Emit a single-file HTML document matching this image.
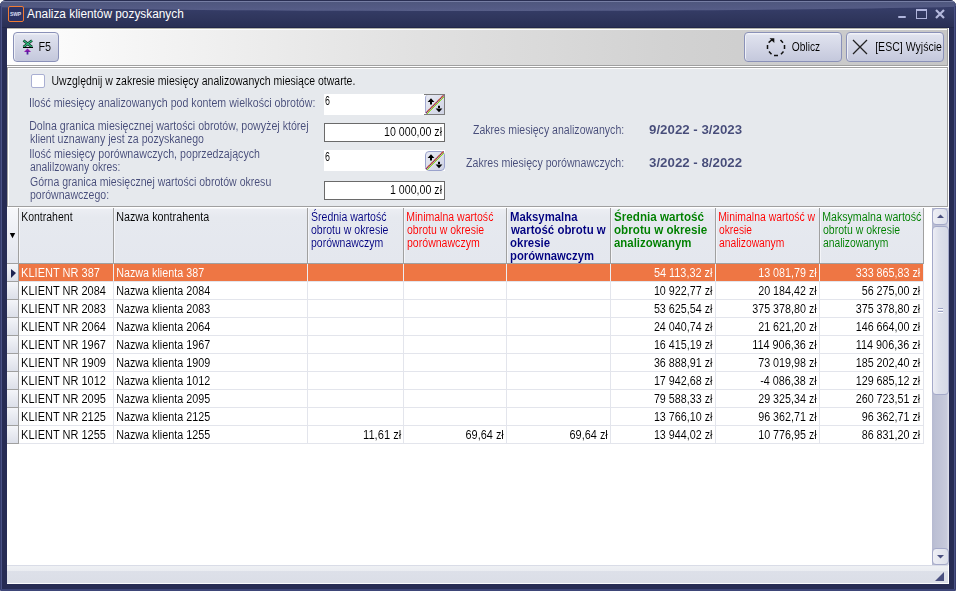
<!DOCTYPE html>
<html><head><meta charset="utf-8">
<style>
*{margin:0;padding:0;box-sizing:border-box}
html,body{width:956px;height:591px;overflow:hidden;background:#fff;font-family:"Liberation Sans",sans-serif}
.a{position:absolute}
#win{left:0;top:0;width:956px;height:591px;background:#272c54;border-radius:6px 6px 2px 2px;overflow:hidden}
#title{left:0;top:0;width:956px;height:28px;background:linear-gradient(#292e52 0px,#292e52 1px,#767ea4 1px,#767ea4 2px,#383f6b 2px,#353c67 9px,#31385f 16px,#2d335a 22px,#2a3055 26.5px,#22274a 27px,#22274a 28px)}
#band{left:-97px;top:2px;width:1134px;height:8.7px;background:linear-gradient(#4f577e,#535a84 60%,#575e88);border-radius:0 0 50% 50%/0 0 100% 100%}
.btn{border:1px solid #8a91b8;border-radius:4px;background:linear-gradient(#f2f3f8 0px,#f2f3f8 1px,#dfe2ee 2px,#d3d6e6 50%,#c4c8dc);box-shadow:inset 1px 0 0 #eef0f6}
.hsep{background:#a0a0a0}
svg{position:absolute;left:0;top:0}
</style></head><body>
<div id="win" class="a">
  <div id="title" class="a"></div>
  <div id="band" class="a"></div>
  <!-- frame edge lines -->
  <div class="a" style="left:0;top:6px;width:1px;height:585px;background:#353c6c"></div>
  <div class="a" style="left:1px;top:4px;width:1px;height:587px;background:#4a5284"></div>
  <div class="a" style="left:955px;top:6px;width:1px;height:585px;background:#353c6c"></div>
  <div class="a" style="left:954px;top:4px;width:1px;height:587px;background:#4a5284"></div>
  <div class="a" style="left:0;top:589px;width:956px;height:2px;background:#3e4678"></div>
  <!-- app icon -->
  <div class="a" style="left:8px;top:6px;width:16px;height:16px;border:1.5px solid #f07b34;border-radius:2px;background:#2b3264"></div>
  <div class="a" style="left:10px;top:12px;width:13px;height:4px;color:#d8dcf0;font-size:5px;line-height:4px;font-weight:bold;letter-spacing:-0.2px">SWP</div>
  <!-- caption buttons -->
  <div class="a" style="left:898px;top:16px;width:8px;height:2px;border-radius:1px;background:#b0b5dc"></div>
  <div class="a" style="left:916px;top:9px;width:11px;height:10px;border:1.3px solid #b0b5dc;border-top-width:2.3px"></div>

  <!-- client area -->
  <div class="a" style="left:7px;top:28px;width:942px;height:556px;background:#fff"></div>
  <!-- toolbar -->
  <div class="a" style="left:7px;top:28px;width:942px;height:39px;background:linear-gradient(90deg,#ffffff 0%,#f4f4f4 15%,#e2e2e2 42%,#d2d2d2 70%,#c6c6c6 100%)"></div>
  <div class="a" style="left:7px;top:28px;width:942px;height:1px;background:#b4b4ac"></div>
  <div class="a" style="left:7px;top:29px;width:940px;height:1px;background:#ffffff"></div>
  <div class="a" style="left:7px;top:65px;width:941px;height:1px;background:#a0a0a0"></div>
  <div class="a" style="left:7px;top:66px;width:942px;height:1px;background:#ffffff"></div>
  <div class="a" style="left:947px;top:29px;width:1px;height:37px;background:#a0a0a0"></div>
  <div class="a" style="left:948px;top:28px;width:1px;height:39px;background:#ffffff"></div>
  <div class="a btn" style="left:13px;top:32px;width:46px;height:30px"></div>
  <div class="a btn" style="left:744px;top:32px;width:98px;height:30px"></div>
  <div class="a btn" style="left:846px;top:32px;width:98px;height:30px"></div>

  <!-- panel -->
  <div class="a" style="left:7px;top:67px;width:942px;height:140px;background:#e6e9ed"></div>
  <div class="a" style="left:7px;top:67px;width:941px;height:1px;background:#a0a0a0"></div>
  <div class="a" style="left:8px;top:68px;width:939px;height:1px;background:#ffffff"></div>
  <div class="a" style="left:7px;top:67px;width:1px;height:140px;background:#a0a0a0"></div>
  <div class="a" style="left:8px;top:68px;width:1px;height:138px;background:#ffffff"></div>
  <div class="a" style="left:947px;top:67px;width:1px;height:140px;background:#a0a0a0"></div>
  <div class="a" style="left:948px;top:67px;width:1px;height:140px;background:#ffffff"></div>
  <div class="a" style="left:7px;top:206px;width:941px;height:1px;background:#a0a0a0"></div>
  <!-- checkbox -->
  <div class="a" style="left:31px;top:74px;width:14px;height:14px;border:1px solid #a9afd2;border-radius:2px;background:#fff"></div>
  <!-- inputs -->
  <div class="a" style="left:324px;top:94px;width:100px;height:21px;background:#fff"></div>
  <div class="a" style="left:424px;top:94px;width:21px;height:21px;border:1px solid #7c7c7c;border-left:0;background:#fff"></div>
  <div class="a" style="left:425px;top:95px;width:19px;height:19px;border-radius:3px 0 0 3px;border-left:1px solid #a4abd2;background:linear-gradient(135deg,#e8eaf3,#cfd3e4)"></div>
  <div class="a" style="left:324px;top:123px;width:121px;height:19px;border:1px solid #6a6a6a;background:#fff"></div>
  <div class="a" style="left:324px;top:150px;width:121px;height:21px;background:#fff"></div>
  <div class="a" style="left:425px;top:151px;width:20px;height:20px;border-radius:4px;border:1px solid #9aa2cc;background:linear-gradient(135deg,#e8eaf3,#cfd3e4)"></div>
  <div class="a" style="left:324px;top:181px;width:121px;height:19px;border:1px solid #6a6a6a;background:#fff"></div>

  <!-- grid -->
  <div class="a" style="left:7px;top:207px;width:942px;height:358px;background:#fff"></div>
  <div class="a" style="left:7px;top:207px;width:917px;height:57px;background:linear-gradient(#ffffff 0px,#ffffff 1px,#eceef3 2px,#e6e9ef 10px,#e4e7ee 100%)"></div>
  <div class="a" style="left:7px;top:208px;width:11px;height:55px;background:linear-gradient(#f7f8fb,#e2e5ee)"></div>
  <div class="a" style="left:7px;top:263px;width:917px;height:1px;background:#a0a0a0"></div>
  <div class="a" style="left:18px;top:208px;width:1px;height:55px;background:#a0a0a0"></div>
<div class="a" style="left:19px;top:208px;width:1px;height:55px;background:#f4f5f9"></div>
<div class="a" style="left:113px;top:208px;width:1px;height:55px;background:#a0a0a0"></div>
<div class="a" style="left:114px;top:208px;width:1px;height:55px;background:#f4f5f9"></div>
<div class="a" style="left:307px;top:208px;width:1px;height:55px;background:#a0a0a0"></div>
<div class="a" style="left:308px;top:208px;width:1px;height:55px;background:#f4f5f9"></div>
<div class="a" style="left:403px;top:208px;width:1px;height:55px;background:#a0a0a0"></div>
<div class="a" style="left:404px;top:208px;width:1px;height:55px;background:#f4f5f9"></div>
<div class="a" style="left:506px;top:208px;width:1px;height:55px;background:#a0a0a0"></div>
<div class="a" style="left:507px;top:208px;width:1px;height:55px;background:#f4f5f9"></div>
<div class="a" style="left:610px;top:208px;width:1px;height:55px;background:#a0a0a0"></div>
<div class="a" style="left:611px;top:208px;width:1px;height:55px;background:#f4f5f9"></div>
<div class="a" style="left:715px;top:208px;width:1px;height:55px;background:#a0a0a0"></div>
<div class="a" style="left:716px;top:208px;width:1px;height:55px;background:#f4f5f9"></div>
<div class="a" style="left:819px;top:208px;width:1px;height:55px;background:#a0a0a0"></div>
<div class="a" style="left:820px;top:208px;width:1px;height:55px;background:#f4f5f9"></div>
<div class="a" style="left:923px;top:208px;width:1px;height:55px;background:#a0a0a0"></div>
<div class="a" style="left:19px;top:264px;width:904px;height:17px;background:#ee7644"></div>
<div class="a" style="left:7px;top:264px;width:11px;height:17px;background:linear-gradient(#f4f5f9,#dcdfe9)"></div>
<div class="a" style="left:7px;top:281px;width:12px;height:1px;background:#a0a0a0"></div>
<div class="a" style="left:19px;top:281px;width:905px;height:1px;background:#e3e5ec"></div>
<div class="a" style="left:18px;top:264px;width:1px;height:18px;background:#a0a0a0"></div>
<div class="a" style="left:113px;top:264px;width:1px;height:17px;background:#eceef3"></div>
<div class="a" style="left:307px;top:264px;width:1px;height:17px;background:#eceef3"></div>
<div class="a" style="left:403px;top:264px;width:1px;height:17px;background:#eceef3"></div>
<div class="a" style="left:506px;top:264px;width:1px;height:17px;background:#eceef3"></div>
<div class="a" style="left:610px;top:264px;width:1px;height:17px;background:#eceef3"></div>
<div class="a" style="left:715px;top:264px;width:1px;height:17px;background:#eceef3"></div>
<div class="a" style="left:819px;top:264px;width:1px;height:17px;background:#eceef3"></div>
<div class="a" style="left:923px;top:264px;width:1px;height:17px;background:#eceef3"></div>
<div class="a" style="left:7px;top:282px;width:11px;height:17px;background:linear-gradient(#f4f5f9,#dcdfe9)"></div>
<div class="a" style="left:7px;top:299px;width:12px;height:1px;background:#a0a0a0"></div>
<div class="a" style="left:19px;top:299px;width:905px;height:1px;background:#e3e5ec"></div>
<div class="a" style="left:18px;top:282px;width:1px;height:18px;background:#a0a0a0"></div>
<div class="a" style="left:113px;top:282px;width:1px;height:17px;background:#e3e5ec"></div>
<div class="a" style="left:307px;top:282px;width:1px;height:17px;background:#e3e5ec"></div>
<div class="a" style="left:403px;top:282px;width:1px;height:17px;background:#e3e5ec"></div>
<div class="a" style="left:506px;top:282px;width:1px;height:17px;background:#e3e5ec"></div>
<div class="a" style="left:610px;top:282px;width:1px;height:17px;background:#e3e5ec"></div>
<div class="a" style="left:715px;top:282px;width:1px;height:17px;background:#e3e5ec"></div>
<div class="a" style="left:819px;top:282px;width:1px;height:17px;background:#e3e5ec"></div>
<div class="a" style="left:923px;top:282px;width:1px;height:17px;background:#e3e5ec"></div>
<div class="a" style="left:7px;top:300px;width:11px;height:17px;background:linear-gradient(#f4f5f9,#dcdfe9)"></div>
<div class="a" style="left:7px;top:317px;width:12px;height:1px;background:#a0a0a0"></div>
<div class="a" style="left:19px;top:317px;width:905px;height:1px;background:#e3e5ec"></div>
<div class="a" style="left:18px;top:300px;width:1px;height:18px;background:#a0a0a0"></div>
<div class="a" style="left:113px;top:300px;width:1px;height:17px;background:#e3e5ec"></div>
<div class="a" style="left:307px;top:300px;width:1px;height:17px;background:#e3e5ec"></div>
<div class="a" style="left:403px;top:300px;width:1px;height:17px;background:#e3e5ec"></div>
<div class="a" style="left:506px;top:300px;width:1px;height:17px;background:#e3e5ec"></div>
<div class="a" style="left:610px;top:300px;width:1px;height:17px;background:#e3e5ec"></div>
<div class="a" style="left:715px;top:300px;width:1px;height:17px;background:#e3e5ec"></div>
<div class="a" style="left:819px;top:300px;width:1px;height:17px;background:#e3e5ec"></div>
<div class="a" style="left:923px;top:300px;width:1px;height:17px;background:#e3e5ec"></div>
<div class="a" style="left:7px;top:318px;width:11px;height:17px;background:linear-gradient(#f4f5f9,#dcdfe9)"></div>
<div class="a" style="left:7px;top:335px;width:12px;height:1px;background:#a0a0a0"></div>
<div class="a" style="left:19px;top:335px;width:905px;height:1px;background:#e3e5ec"></div>
<div class="a" style="left:18px;top:318px;width:1px;height:18px;background:#a0a0a0"></div>
<div class="a" style="left:113px;top:318px;width:1px;height:17px;background:#e3e5ec"></div>
<div class="a" style="left:307px;top:318px;width:1px;height:17px;background:#e3e5ec"></div>
<div class="a" style="left:403px;top:318px;width:1px;height:17px;background:#e3e5ec"></div>
<div class="a" style="left:506px;top:318px;width:1px;height:17px;background:#e3e5ec"></div>
<div class="a" style="left:610px;top:318px;width:1px;height:17px;background:#e3e5ec"></div>
<div class="a" style="left:715px;top:318px;width:1px;height:17px;background:#e3e5ec"></div>
<div class="a" style="left:819px;top:318px;width:1px;height:17px;background:#e3e5ec"></div>
<div class="a" style="left:923px;top:318px;width:1px;height:17px;background:#e3e5ec"></div>
<div class="a" style="left:7px;top:336px;width:11px;height:17px;background:linear-gradient(#f4f5f9,#dcdfe9)"></div>
<div class="a" style="left:7px;top:353px;width:12px;height:1px;background:#a0a0a0"></div>
<div class="a" style="left:19px;top:353px;width:905px;height:1px;background:#e3e5ec"></div>
<div class="a" style="left:18px;top:336px;width:1px;height:18px;background:#a0a0a0"></div>
<div class="a" style="left:113px;top:336px;width:1px;height:17px;background:#e3e5ec"></div>
<div class="a" style="left:307px;top:336px;width:1px;height:17px;background:#e3e5ec"></div>
<div class="a" style="left:403px;top:336px;width:1px;height:17px;background:#e3e5ec"></div>
<div class="a" style="left:506px;top:336px;width:1px;height:17px;background:#e3e5ec"></div>
<div class="a" style="left:610px;top:336px;width:1px;height:17px;background:#e3e5ec"></div>
<div class="a" style="left:715px;top:336px;width:1px;height:17px;background:#e3e5ec"></div>
<div class="a" style="left:819px;top:336px;width:1px;height:17px;background:#e3e5ec"></div>
<div class="a" style="left:923px;top:336px;width:1px;height:17px;background:#e3e5ec"></div>
<div class="a" style="left:7px;top:354px;width:11px;height:17px;background:linear-gradient(#f4f5f9,#dcdfe9)"></div>
<div class="a" style="left:7px;top:371px;width:12px;height:1px;background:#a0a0a0"></div>
<div class="a" style="left:19px;top:371px;width:905px;height:1px;background:#e3e5ec"></div>
<div class="a" style="left:18px;top:354px;width:1px;height:18px;background:#a0a0a0"></div>
<div class="a" style="left:113px;top:354px;width:1px;height:17px;background:#e3e5ec"></div>
<div class="a" style="left:307px;top:354px;width:1px;height:17px;background:#e3e5ec"></div>
<div class="a" style="left:403px;top:354px;width:1px;height:17px;background:#e3e5ec"></div>
<div class="a" style="left:506px;top:354px;width:1px;height:17px;background:#e3e5ec"></div>
<div class="a" style="left:610px;top:354px;width:1px;height:17px;background:#e3e5ec"></div>
<div class="a" style="left:715px;top:354px;width:1px;height:17px;background:#e3e5ec"></div>
<div class="a" style="left:819px;top:354px;width:1px;height:17px;background:#e3e5ec"></div>
<div class="a" style="left:923px;top:354px;width:1px;height:17px;background:#e3e5ec"></div>
<div class="a" style="left:7px;top:372px;width:11px;height:17px;background:linear-gradient(#f4f5f9,#dcdfe9)"></div>
<div class="a" style="left:7px;top:389px;width:12px;height:1px;background:#a0a0a0"></div>
<div class="a" style="left:19px;top:389px;width:905px;height:1px;background:#e3e5ec"></div>
<div class="a" style="left:18px;top:372px;width:1px;height:18px;background:#a0a0a0"></div>
<div class="a" style="left:113px;top:372px;width:1px;height:17px;background:#e3e5ec"></div>
<div class="a" style="left:307px;top:372px;width:1px;height:17px;background:#e3e5ec"></div>
<div class="a" style="left:403px;top:372px;width:1px;height:17px;background:#e3e5ec"></div>
<div class="a" style="left:506px;top:372px;width:1px;height:17px;background:#e3e5ec"></div>
<div class="a" style="left:610px;top:372px;width:1px;height:17px;background:#e3e5ec"></div>
<div class="a" style="left:715px;top:372px;width:1px;height:17px;background:#e3e5ec"></div>
<div class="a" style="left:819px;top:372px;width:1px;height:17px;background:#e3e5ec"></div>
<div class="a" style="left:923px;top:372px;width:1px;height:17px;background:#e3e5ec"></div>
<div class="a" style="left:7px;top:390px;width:11px;height:17px;background:linear-gradient(#f4f5f9,#dcdfe9)"></div>
<div class="a" style="left:7px;top:407px;width:12px;height:1px;background:#a0a0a0"></div>
<div class="a" style="left:19px;top:407px;width:905px;height:1px;background:#e3e5ec"></div>
<div class="a" style="left:18px;top:390px;width:1px;height:18px;background:#a0a0a0"></div>
<div class="a" style="left:113px;top:390px;width:1px;height:17px;background:#e3e5ec"></div>
<div class="a" style="left:307px;top:390px;width:1px;height:17px;background:#e3e5ec"></div>
<div class="a" style="left:403px;top:390px;width:1px;height:17px;background:#e3e5ec"></div>
<div class="a" style="left:506px;top:390px;width:1px;height:17px;background:#e3e5ec"></div>
<div class="a" style="left:610px;top:390px;width:1px;height:17px;background:#e3e5ec"></div>
<div class="a" style="left:715px;top:390px;width:1px;height:17px;background:#e3e5ec"></div>
<div class="a" style="left:819px;top:390px;width:1px;height:17px;background:#e3e5ec"></div>
<div class="a" style="left:923px;top:390px;width:1px;height:17px;background:#e3e5ec"></div>
<div class="a" style="left:7px;top:408px;width:11px;height:17px;background:linear-gradient(#f4f5f9,#dcdfe9)"></div>
<div class="a" style="left:7px;top:425px;width:12px;height:1px;background:#a0a0a0"></div>
<div class="a" style="left:19px;top:425px;width:905px;height:1px;background:#e3e5ec"></div>
<div class="a" style="left:18px;top:408px;width:1px;height:18px;background:#a0a0a0"></div>
<div class="a" style="left:113px;top:408px;width:1px;height:17px;background:#e3e5ec"></div>
<div class="a" style="left:307px;top:408px;width:1px;height:17px;background:#e3e5ec"></div>
<div class="a" style="left:403px;top:408px;width:1px;height:17px;background:#e3e5ec"></div>
<div class="a" style="left:506px;top:408px;width:1px;height:17px;background:#e3e5ec"></div>
<div class="a" style="left:610px;top:408px;width:1px;height:17px;background:#e3e5ec"></div>
<div class="a" style="left:715px;top:408px;width:1px;height:17px;background:#e3e5ec"></div>
<div class="a" style="left:819px;top:408px;width:1px;height:17px;background:#e3e5ec"></div>
<div class="a" style="left:923px;top:408px;width:1px;height:17px;background:#e3e5ec"></div>
<div class="a" style="left:7px;top:426px;width:11px;height:17px;background:linear-gradient(#f4f5f9,#dcdfe9)"></div>
<div class="a" style="left:7px;top:443px;width:12px;height:1px;background:#a0a0a0"></div>
<div class="a" style="left:19px;top:443px;width:905px;height:1px;background:#e3e5ec"></div>
<div class="a" style="left:18px;top:426px;width:1px;height:18px;background:#a0a0a0"></div>
<div class="a" style="left:113px;top:426px;width:1px;height:17px;background:#e3e5ec"></div>
<div class="a" style="left:307px;top:426px;width:1px;height:17px;background:#e3e5ec"></div>
<div class="a" style="left:403px;top:426px;width:1px;height:17px;background:#e3e5ec"></div>
<div class="a" style="left:506px;top:426px;width:1px;height:17px;background:#e3e5ec"></div>
<div class="a" style="left:610px;top:426px;width:1px;height:17px;background:#e3e5ec"></div>
<div class="a" style="left:715px;top:426px;width:1px;height:17px;background:#e3e5ec"></div>
<div class="a" style="left:819px;top:426px;width:1px;height:17px;background:#e3e5ec"></div>
<div class="a" style="left:923px;top:426px;width:1px;height:17px;background:#e3e5ec"></div>

  <!-- scrollbar -->
  <div class="a" style="left:932px;top:208px;width:17px;height:357px;background:linear-gradient(90deg,#b6bad1 0px,#bcc0d4 3px,#c2c5d8 10px,#c8cbdc 15px,#dadce8 16px)"></div>
  <div class="a" style="left:932px;top:208px;width:16px;height:17px;border:1px solid #a4a9c9;border-radius:4px;background:linear-gradient(90deg,#eeeff5,#dcdfea)"></div>
  <div class="a" style="left:932px;top:226px;width:17px;height:169px;border:1px solid #a4a9c9;border-radius:4px;background:linear-gradient(90deg,#ecedf4,#dde0eb 40%,#d6d9e6)"></div>
  <div class="a" style="left:932px;top:548px;width:17px;height:17px;border:1px solid #a4a9c9;border-radius:4px;background:linear-gradient(90deg,#eeeff5,#dcdfea)"></div>

  <!-- status bar -->
  <div class="a" style="left:7px;top:565px;width:942px;height:19px;background:linear-gradient(#d9dce7 0px,#d9dce7 1px,#eef0f4 1px,#eaecf1 6px,#dde0e9 6px,#dbdee7 18px,#fbfbfd 18px)"></div>
  <div class="a" style="left:948px;top:565px;width:1px;height:19px;background:#fff"></div>
</div>
<svg width="956" height="591" viewBox="0 0 956 591" font-family="'Liberation Sans', sans-serif">
  <defs><filter id="crisp" x="0" y="0" width="956" height="591" filterUnits="userSpaceOnUse"><feComponentTransfer><feFuncA type="gamma" amplitude="1" exponent="1.15" offset="0"/></feComponentTransfer></filter></defs>
  <!-- close X -->
  <path d="M936 10 L944 18 M944 10 L936 18" stroke="#b4b9dc" stroke-width="2.2"/>
  <!-- F5 icon -->
  <g>
    <path d="M23.5 40.5 L32 47 M32 40.5 L23.5 47" stroke="#102018" stroke-width="2.6"/>
    <path d="M23.5 40.5 L32 47 M32 40.5 L23.5 47" stroke="#30c080" stroke-width="1.2"/>
    <path d="M23 47.5 L33 47.5" stroke="#000" stroke-width="1"/>
    <path d="M24 52 L27.5 48.5 L31 52 Z" fill="#901cb0"/>
    <path d="M26.6 51 H28.4 V54.5 H26.6 Z" fill="#5020a0"/>
  </g>
  <!-- Oblicz icon dashed circle -->
  <path d="M780.5 40 L783 42.8 M784.5 45 V49 M783.5 51.5 L781 54.2 M774 55.5 H778 M771.5 54.2 L769 51.5 M767.5 45 V49 M768.6 42.6 L772.5 39.2" stroke="#111" stroke-width="1.5" fill="none"/>
  <path d="M769.5 38.2 L774.3 38.2 L774.3 43 Z" fill="#111"/>
  <!-- Esc icon X -->
  <path d="M853 40 L867 54 M867 40 L853 54" stroke="#222" stroke-width="1.3"/>
  <!-- spin icons -->
  <g id="spin1">
    <path d="M426 113 L443.5 95.5" stroke="#e06a10" stroke-width="1.2"/>
    <path d="M426 113 L443.5 95.5" stroke="#6020a0" stroke-width="1.2" stroke-dasharray="1 1"/>
    <path d="M427 114 L444 97" stroke="#80e020" stroke-width="1"/>
    <path d="M427.6 102 L431 98.3 L434.4 102 Z M430 101.5 H432 V104.6 H430 Z" fill="#000"/>
    <path d="M435.6 108.6 L439 112.3 L442.4 108.6 Z M438 105.8 H440 V109 H438 Z" fill="#000"/>
  </g>
  <use href="#spin1" transform="translate(0,56)"/>
  <!-- grid row indicator -->
  <path d="M9.8 233 H15.2 L12.5 238.2 Z" fill="#000"/>
  <path d="M11 269 L16 273 L11 278 Z" fill="#1e2452"/>
  <!-- scrollbar arrows & grip -->
  <path d="M937 218 L940.5 214.5 L944 218 Z" fill="#4a5080"/>
  <path d="M937 555 L940.5 558.5 L944 555 Z" fill="#4a5080"/>
  <path d="M938 308.5 H943 M938 311.5 H943" stroke="#9ca2c4" stroke-width="1"/>
  <path d="M938 309.5 H943 M938 312.5 H943" stroke="#fff" stroke-width="1"/>
  <!-- size grip -->
  <path d="M935 581 L944 572 L944 581 Z" fill="#4a5080"/>
<text x="27.10" y="18" font-size="12.5" fill="#ffffff" textLength="156.65" lengthAdjust="spacingAndGlyphs">Analiza klientów pozyskanych</text>
<g filter="url(#crisp)"><text x="38.43" y="51" font-size="12.5" fill="#000" textLength="12.73" lengthAdjust="spacingAndGlyphs">F5</text>
<text x="791.80" y="51" font-size="12.5" fill="#000" textLength="28.40" lengthAdjust="spacingAndGlyphs">Oblicz</text>
<text x="875.20" y="51" font-size="12.5" fill="#000" textLength="66.76" lengthAdjust="spacingAndGlyphs">[ESC] Wyjście</text>
<text x="51.50" y="85" font-size="12.5" fill="#000" textLength="303.90" lengthAdjust="spacingAndGlyphs">Uwzględnij w zakresie miesięcy analizowanych miesiące otwarte.</text>
<text x="28.95" y="107" font-size="12.5" fill="#474d7a" textLength="286.45" lengthAdjust="spacingAndGlyphs">Ilość miesięcy analizowanych pod kontem wielkości obrotów:</text>
<text x="29.15" y="130" font-size="12.5" fill="#474d7a" textLength="279.51" lengthAdjust="spacingAndGlyphs">Dolna granica miesięcznej wartości obrotów, powyżej której</text>
<text x="30.00" y="143" font-size="12.5" fill="#474d7a" textLength="173.96" lengthAdjust="spacingAndGlyphs">klient uznawany jest za pozyskanego</text>
<text x="29.15" y="158" font-size="12.5" fill="#474d7a" textLength="230.81" lengthAdjust="spacingAndGlyphs">Ilość miesięcy porównawczych, poprzedzających</text>
<text x="30.00" y="171" font-size="12.5" fill="#474d7a" textLength="90.39" lengthAdjust="spacingAndGlyphs">analilzowany okres:</text>
<text x="30.00" y="186" font-size="12.5" fill="#474d7a" textLength="241.26" lengthAdjust="spacingAndGlyphs">Górna granica miesięcznej wartości obrotów okresu</text>
<text x="30.00" y="199" font-size="12.5" fill="#474d7a" textLength="79.10" lengthAdjust="spacingAndGlyphs">porównawczego:</text>
<text x="473.00" y="134" font-size="12.5" fill="#474d7a" textLength="151.20" lengthAdjust="spacingAndGlyphs">Zakres miesięcy analizowanych:</text>
<text x="466.00" y="167" font-size="12.5" fill="#474d7a" textLength="158.20" lengthAdjust="spacingAndGlyphs">Zakres miesięcy porównawczych:</text>
<text x="649.00" y="134" font-size="12.5" fill="#474d7a" font-weight="bold" textLength="93.15" lengthAdjust="spacingAndGlyphs">9/2022 - 3/2023</text>
<text x="649.00" y="167" font-size="12.5" fill="#474d7a" font-weight="bold" textLength="93.15" lengthAdjust="spacingAndGlyphs">3/2022 - 8/2022</text>
<text x="325.00" y="105" font-size="12.5" fill="#000" textLength="4.97" lengthAdjust="spacingAndGlyphs">6</text>
<text x="384.00" y="136" font-size="12.5" fill="#000" textLength="58.01" lengthAdjust="spacingAndGlyphs">10 000,00 zł</text>
<text x="325.00" y="161" font-size="12.5" fill="#000" textLength="4.97" lengthAdjust="spacingAndGlyphs">6</text>
<text x="390.00" y="194" font-size="12.5" fill="#000" textLength="52.01" lengthAdjust="spacingAndGlyphs">1 000,00 zł</text>
<text x="21.16" y="221" font-size="12.5" fill="#000" textLength="51.40" lengthAdjust="spacingAndGlyphs">Kontrahent</text>
<text x="116.14" y="221" font-size="12.5" fill="#000" textLength="93.02" lengthAdjust="spacingAndGlyphs">Nazwa kontrahenta</text>
<text x="311.00" y="221" font-size="12.5" fill="#000080" textLength="75.51" lengthAdjust="spacingAndGlyphs">Średnia wartość</text>
<text x="311.00" y="234" font-size="12.5" fill="#000080" textLength="77.36" lengthAdjust="spacingAndGlyphs">obrotu w okresie</text>
<text x="311.00" y="247" font-size="12.5" fill="#000080" textLength="72.35" lengthAdjust="spacingAndGlyphs">porównawczym</text>
<text x="406.16" y="221" font-size="12.5" fill="#ff0000" textLength="87.25" lengthAdjust="spacingAndGlyphs">Minimalna wartość</text>
<text x="407.00" y="234" font-size="12.5" fill="#ff0000" textLength="77.16" lengthAdjust="spacingAndGlyphs">obrotu w okresie</text>
<text x="407.00" y="247" font-size="12.5" fill="#ff0000" textLength="72.75" lengthAdjust="spacingAndGlyphs">porównawczym</text>
<text x="510.00" y="221" font-size="12.5" fill="#000080" font-weight="bold" textLength="67.45" lengthAdjust="spacingAndGlyphs">Maksymalna</text>
<text x="510.92" y="234" font-size="12.5" fill="#000080" font-weight="bold" textLength="94.83" lengthAdjust="spacingAndGlyphs">wartość obrotu w</text>
<text x="510.00" y="247" font-size="12.5" fill="#000080" font-weight="bold" textLength="40.16" lengthAdjust="spacingAndGlyphs">okresie</text>
<text x="510.00" y="260" font-size="12.5" fill="#000080" font-weight="bold" textLength="84.10" lengthAdjust="spacingAndGlyphs">porównawczym</text>
<text x="614.00" y="221" font-size="12.5" fill="#008000" font-weight="bold" textLength="90.06" lengthAdjust="spacingAndGlyphs">Średnia wartość</text>
<text x="614.00" y="234" font-size="12.5" fill="#008000" font-weight="bold" textLength="93.26" lengthAdjust="spacingAndGlyphs">obrotu w okresie</text>
<text x="614.00" y="247" font-size="12.5" fill="#008000" font-weight="bold" textLength="77.40" lengthAdjust="spacingAndGlyphs">analizowanym</text>
<text x="718.16" y="221" font-size="12.5" fill="#ff0000" textLength="97.02" lengthAdjust="spacingAndGlyphs">Minimalna wartość w</text>
<text x="719.00" y="234" font-size="12.5" fill="#ff0000" textLength="32.96" lengthAdjust="spacingAndGlyphs">okresie</text>
<text x="719.00" y="247" font-size="12.5" fill="#ff0000" textLength="65.34" lengthAdjust="spacingAndGlyphs">analizowanym</text>
<text x="822.15" y="221" font-size="12.5" fill="#008000" textLength="99.26" lengthAdjust="spacingAndGlyphs">Maksymalna wartość</text>
<text x="823.00" y="234" font-size="12.5" fill="#008000" textLength="77.16" lengthAdjust="spacingAndGlyphs">obrotu w okresie</text>
<text x="823.00" y="247" font-size="12.5" fill="#008000" textLength="65.34" lengthAdjust="spacingAndGlyphs">analizowanym</text>
<text x="21.12" y="277" font-size="12.5" fill="#ffffff" textLength="78.84" lengthAdjust="spacingAndGlyphs">KLIENT NR 387</text>
<text x="116.14" y="277" font-size="12.5" fill="#ffffff" textLength="88.02" lengthAdjust="spacingAndGlyphs">Nazwa klienta 387</text>
<text x="653.90" y="277" font-size="12.5" fill="#ffffff" textLength="58.51" lengthAdjust="spacingAndGlyphs">54 113,32 zł</text>
<text x="758.20" y="277" font-size="12.5" fill="#ffffff" textLength="58.51" lengthAdjust="spacingAndGlyphs">13 081,79 zł</text>
<text x="855.70" y="277" font-size="12.5" fill="#ffffff" textLength="64.51" lengthAdjust="spacingAndGlyphs">333 865,83 zł</text>
<text x="21.12" y="295" font-size="12.5" fill="#000000" textLength="84.84" lengthAdjust="spacingAndGlyphs">KLIENT NR 2084</text>
<text x="116.14" y="295" font-size="12.5" fill="#000000" textLength="94.02" lengthAdjust="spacingAndGlyphs">Nazwa klienta 2084</text>
<text x="653.90" y="295" font-size="12.5" fill="#000000" textLength="58.51" lengthAdjust="spacingAndGlyphs">10 922,77 zł</text>
<text x="758.20" y="295" font-size="12.5" fill="#000000" textLength="58.51" lengthAdjust="spacingAndGlyphs">20 184,42 zł</text>
<text x="861.70" y="295" font-size="12.5" fill="#000000" textLength="58.51" lengthAdjust="spacingAndGlyphs">56 275,00 zł</text>
<text x="21.12" y="313" font-size="12.5" fill="#000000" textLength="84.84" lengthAdjust="spacingAndGlyphs">KLIENT NR 2083</text>
<text x="116.14" y="313" font-size="12.5" fill="#000000" textLength="94.02" lengthAdjust="spacingAndGlyphs">Nazwa klienta 2083</text>
<text x="653.90" y="313" font-size="12.5" fill="#000000" textLength="58.51" lengthAdjust="spacingAndGlyphs">53 625,54 zł</text>
<text x="752.20" y="313" font-size="12.5" fill="#000000" textLength="64.51" lengthAdjust="spacingAndGlyphs">375 378,80 zł</text>
<text x="855.70" y="313" font-size="12.5" fill="#000000" textLength="64.51" lengthAdjust="spacingAndGlyphs">375 378,80 zł</text>
<text x="21.12" y="331" font-size="12.5" fill="#000000" textLength="84.84" lengthAdjust="spacingAndGlyphs">KLIENT NR 2064</text>
<text x="116.14" y="331" font-size="12.5" fill="#000000" textLength="94.02" lengthAdjust="spacingAndGlyphs">Nazwa klienta 2064</text>
<text x="653.90" y="331" font-size="12.5" fill="#000000" textLength="58.51" lengthAdjust="spacingAndGlyphs">24 040,74 zł</text>
<text x="758.20" y="331" font-size="12.5" fill="#000000" textLength="58.51" lengthAdjust="spacingAndGlyphs">21 621,20 zł</text>
<text x="855.70" y="331" font-size="12.5" fill="#000000" textLength="64.51" lengthAdjust="spacingAndGlyphs">146 664,00 zł</text>
<text x="21.12" y="349" font-size="12.5" fill="#000000" textLength="84.84" lengthAdjust="spacingAndGlyphs">KLIENT NR 1967</text>
<text x="116.14" y="349" font-size="12.5" fill="#000000" textLength="94.02" lengthAdjust="spacingAndGlyphs">Nazwa klienta 1967</text>
<text x="653.90" y="349" font-size="12.5" fill="#000000" textLength="58.51" lengthAdjust="spacingAndGlyphs">16 415,19 zł</text>
<text x="752.20" y="349" font-size="12.5" fill="#000000" textLength="64.51" lengthAdjust="spacingAndGlyphs">114 906,36 zł</text>
<text x="855.70" y="349" font-size="12.5" fill="#000000" textLength="64.51" lengthAdjust="spacingAndGlyphs">114 906,36 zł</text>
<text x="21.12" y="367" font-size="12.5" fill="#000000" textLength="84.84" lengthAdjust="spacingAndGlyphs">KLIENT NR 1909</text>
<text x="116.14" y="367" font-size="12.5" fill="#000000" textLength="94.02" lengthAdjust="spacingAndGlyphs">Nazwa klienta 1909</text>
<text x="653.90" y="367" font-size="12.5" fill="#000000" textLength="58.51" lengthAdjust="spacingAndGlyphs">36 888,91 zł</text>
<text x="758.20" y="367" font-size="12.5" fill="#000000" textLength="58.51" lengthAdjust="spacingAndGlyphs">73 019,98 zł</text>
<text x="855.70" y="367" font-size="12.5" fill="#000000" textLength="64.51" lengthAdjust="spacingAndGlyphs">185 202,40 zł</text>
<text x="21.12" y="385" font-size="12.5" fill="#000000" textLength="84.84" lengthAdjust="spacingAndGlyphs">KLIENT NR 1012</text>
<text x="116.14" y="385" font-size="12.5" fill="#000000" textLength="94.02" lengthAdjust="spacingAndGlyphs">Nazwa klienta 1012</text>
<text x="653.90" y="385" font-size="12.5" fill="#000000" textLength="58.51" lengthAdjust="spacingAndGlyphs">17 942,68 zł</text>
<text x="760.20" y="385" font-size="12.5" fill="#000000" textLength="56.51" lengthAdjust="spacingAndGlyphs">-4 086,38 zł</text>
<text x="855.70" y="385" font-size="12.5" fill="#000000" textLength="64.51" lengthAdjust="spacingAndGlyphs">129 685,12 zł</text>
<text x="21.12" y="403" font-size="12.5" fill="#000000" textLength="84.84" lengthAdjust="spacingAndGlyphs">KLIENT NR 2095</text>
<text x="116.14" y="403" font-size="12.5" fill="#000000" textLength="94.02" lengthAdjust="spacingAndGlyphs">Nazwa klienta 2095</text>
<text x="653.90" y="403" font-size="12.5" fill="#000000" textLength="58.51" lengthAdjust="spacingAndGlyphs">79 588,33 zł</text>
<text x="758.20" y="403" font-size="12.5" fill="#000000" textLength="58.51" lengthAdjust="spacingAndGlyphs">29 325,34 zł</text>
<text x="855.70" y="403" font-size="12.5" fill="#000000" textLength="64.51" lengthAdjust="spacingAndGlyphs">260 723,51 zł</text>
<text x="21.12" y="421" font-size="12.5" fill="#000000" textLength="84.84" lengthAdjust="spacingAndGlyphs">KLIENT NR 2125</text>
<text x="116.14" y="421" font-size="12.5" fill="#000000" textLength="94.02" lengthAdjust="spacingAndGlyphs">Nazwa klienta 2125</text>
<text x="653.90" y="421" font-size="12.5" fill="#000000" textLength="58.51" lengthAdjust="spacingAndGlyphs">13 766,10 zł</text>
<text x="758.20" y="421" font-size="12.5" fill="#000000" textLength="58.51" lengthAdjust="spacingAndGlyphs">96 362,71 zł</text>
<text x="861.70" y="421" font-size="12.5" fill="#000000" textLength="58.51" lengthAdjust="spacingAndGlyphs">96 362,71 zł</text>
<text x="21.12" y="439" font-size="12.5" fill="#000000" textLength="84.84" lengthAdjust="spacingAndGlyphs">KLIENT NR 1255</text>
<text x="116.14" y="439" font-size="12.5" fill="#000000" textLength="94.02" lengthAdjust="spacingAndGlyphs">Nazwa klienta 1255</text>
<text x="363.00" y="439" font-size="12.5" fill="#000000" textLength="38.30" lengthAdjust="spacingAndGlyphs">11,61 zł</text>
<text x="465.50" y="439" font-size="12.5" fill="#000000" textLength="38.30" lengthAdjust="spacingAndGlyphs">69,64 zł</text>
<text x="569.50" y="439" font-size="12.5" fill="#000000" textLength="38.30" lengthAdjust="spacingAndGlyphs">69,64 zł</text>
<text x="653.90" y="439" font-size="12.5" fill="#000000" textLength="58.51" lengthAdjust="spacingAndGlyphs">13 944,02 zł</text>
<text x="758.20" y="439" font-size="12.5" fill="#000000" textLength="58.51" lengthAdjust="spacingAndGlyphs">10 776,95 zł</text>
<text x="861.70" y="439" font-size="12.5" fill="#000000" textLength="58.51" lengthAdjust="spacingAndGlyphs">86 831,20 zł</text></g>
</svg>
</body></html>
